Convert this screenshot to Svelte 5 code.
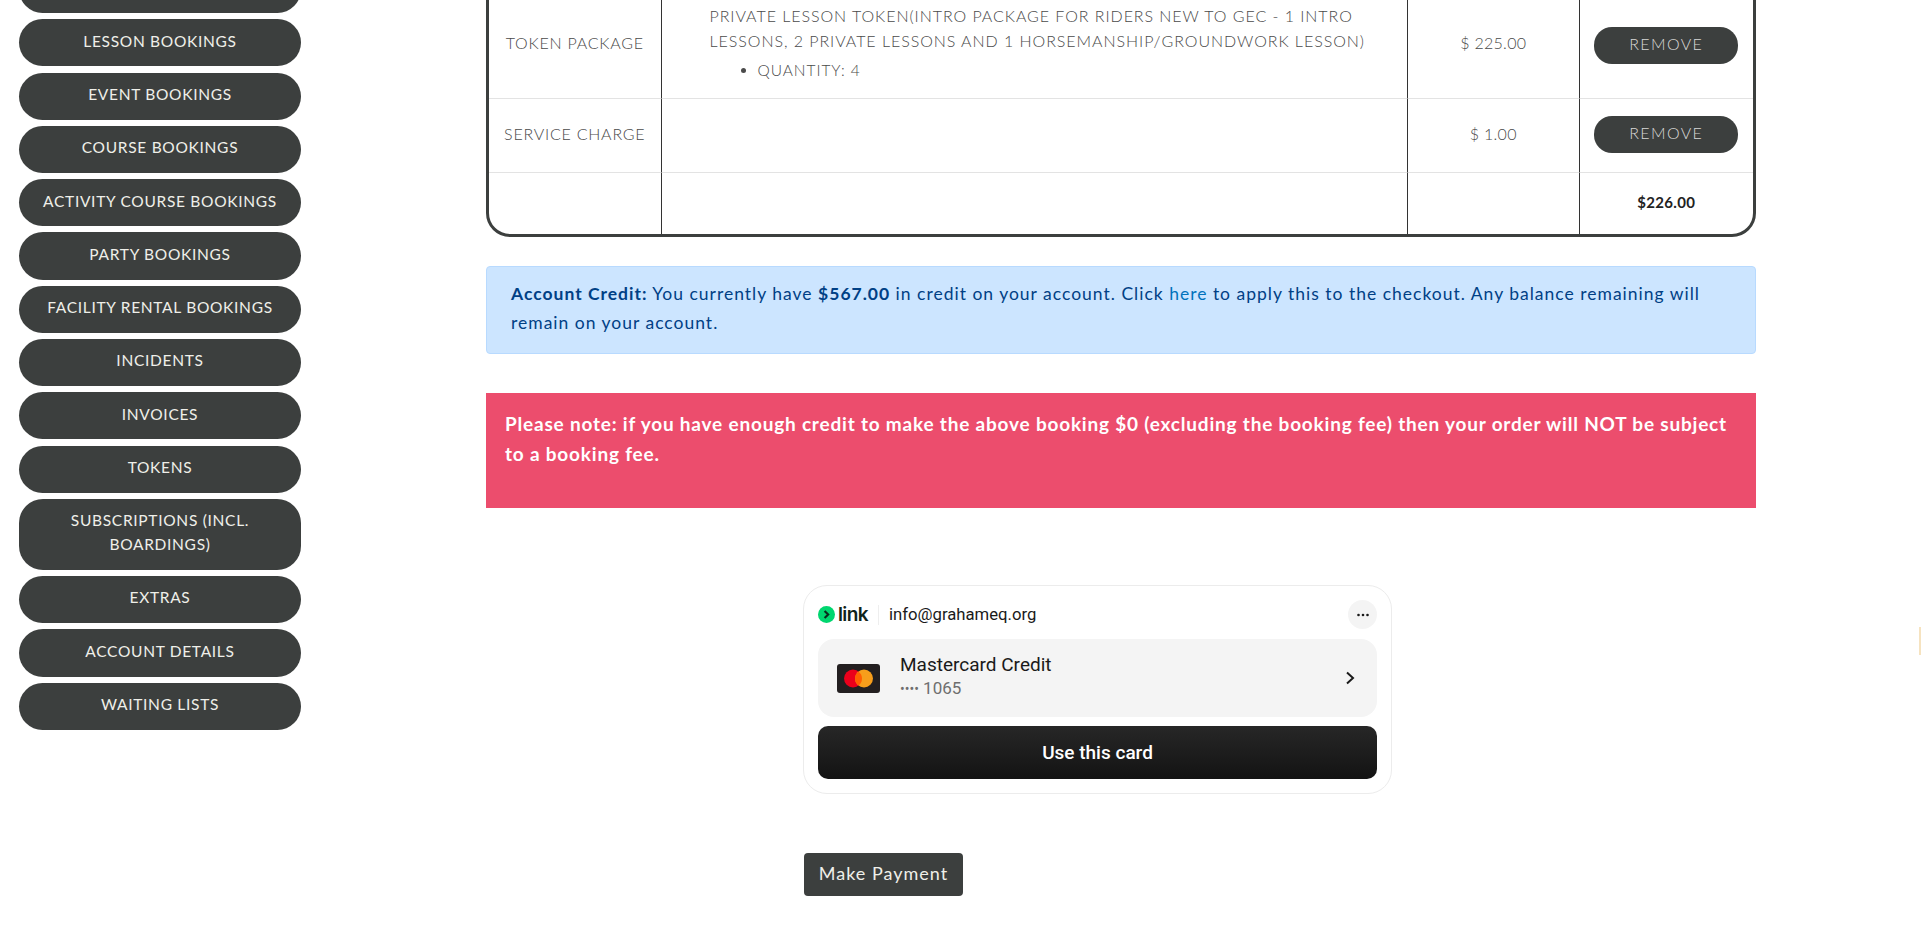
<script lang="ts">
	const navItems = [
		'Private Bookings',
		'Lesson Bookings',
		'Event Bookings',
		'Course Bookings',
		'Activity Course Bookings',
		'Party Bookings',
		'Facility Rental Bookings',
		'Incidents',
		'Invoices',
		'Tokens',
		'Subscriptions (incl. Boardings)',
		'Extras',
		'Account Details',
		'Waiting Lists',
	];
</script>

<div class="page">
	<nav class="sidebar">
		{#each navItems as item}
			<a class="pill" href="#nav">{item}</a>
		{/each}
	</nav>

	<main class="content">
		<table class="basket">
			<colgroup>
				<col class="col-type" />
				<col />
				<col class="col-price" />
				<col class="col-action" />
			</colgroup>
			<tbody>
				<tr class="row-head">
					<td></td>
					<td></td>
					<td></td>
					<td></td>
				</tr>
				<tr class="row-token">
					<td class="center label">Token Package</td>
					<td class="desc">
						Private Lesson Token(Intro package for riders new to GEC - 1 intro lessons, 2 private lessons and 1 horsemanship/groundwork lesson)
						<ul>
							<li>Quantity: 4</li>
						</ul>
					</td>
					<td class="center">$ 225.00</td>
					<td class="center"><button class="remove">Remove</button></td>
				</tr>
				<tr class="row-service">
					<td class="center label">Service Charge</td>
					<td></td>
					<td class="center">$ 1.00</td>
					<td class="center"><button class="remove">Remove</button></td>
				</tr>
				<tr class="row-total">
					<td></td>
					<td></td>
					<td></td>
					<td class="center total">$226.00</td>
				</tr>
			</tbody>
		</table>

		<div class="credit">
			<strong>Account Credit:</strong> You currently have <strong>$567.00</strong> in credit on your account. Click <a href="#here">here</a> to apply this to the checkout. Any balance remaining will remain on your account.
		</div>

		<div class="note">
			Please note: if you have enough credit to make the above booking $0 (excluding the booking fee) then your order will NOT be subject to a booking fee.
		</div>

		<section class="payment">
			<div class="link-card">
				<div class="link-head">
					<span class="link-logo">
						<svg width="17" height="17" viewBox="0 0 16 16" aria-hidden="true">
							<circle cx="8" cy="8" r="8" fill="#00d66f" />
							<path d="M6.2 4.6 9.6 8l-3.4 3.4" fill="none" stroke="#0a2a1c" stroke-width="2" />
						</svg>
						<span class="link-word">link</span>
					</span>
					<span class="link-email">info@grahameq.org</span>
					<span class="link-more" aria-hidden="true">
						<svg width="14" height="4" viewBox="0 0 14 4">
							<circle cx="2.5" cy="2" r="1.3" fill="#1a1a1a" />
							<circle cx="7" cy="2" r="1.3" fill="#1a1a1a" />
							<circle cx="11.5" cy="2" r="1.3" fill="#1a1a1a" />
						</svg>
					</span>
				</div>
				<div class="link-method">
					<svg class="mc" width="43" height="29" viewBox="0 0 43 29" aria-hidden="true">
						<rect width="43" height="29" rx="3" fill="#231f20" />
						<circle cx="16" cy="14.5" r="9" fill="#eb001b" />
						<circle cx="27" cy="14.5" r="9" fill="#f79e1b" />
						<path d="M21.5 7.38a9 9 0 0 1 0 14.24 9 9 0 0 1 0-14.24z" fill="#ff5f00" />
					</svg>
					<div class="method-text">
						<div class="method-name">Mastercard Credit</div>
						<div class="method-num"><span class="dots">••••</span> 1065</div>
					</div>
					<svg class="chev" width="10" height="16" viewBox="0 0 10 16" aria-hidden="true">
						<path d="M2 2.5 8 8l-6 5.5" fill="none" stroke="#1a1a1a" stroke-width="2" />
					</svg>
				</div>
				<button class="link-use">Use this card</button>
			</div>
			<button class="make-payment">Make Payment</button>
		</section>
	</main>

	<span class="edge-tab" aria-hidden="true"></span>
</div>

<style>
	:global(body) {
		margin: 0;
		background: #fff;
		overflow: hidden;
	}

	.page {
		display: flex;
		margin-top: -34px;
		font-family: Lato, 'Liberation Sans', sans-serif;
		color: #4a4a4a;
	}

	.sidebar {
		display: flex;
		flex: none;
		flex-direction: column;
		gap: 6.1px;
		box-sizing: border-box;
		width: 486px;
		padding: 0 0 0 19px;
	}

	.pill {
		box-sizing: border-box;
		width: 282px;
		padding: 9.4px 16px 13.8px;
		border-radius: 24px;
		background: #3c3f3e;
		color: #efefe9;
		font-size: 15.5px;
		line-height: 24px;
		letter-spacing: 0.7px;
		text-align: center;
		text-decoration: none;
		text-transform: uppercase;
	}

	.content {
		display: flex;
		flex: none;
		flex-direction: column;
		width: 1269.5px;
	}

	.basket {
		box-sizing: border-box;
		width: 100%;
		height: 269px;
		border: 3px solid #3c3f3e;
		border-spacing: 0;
		border-collapse: separate;
		border-radius: 24px;
		table-layout: fixed;
		font-size: 16px;
		font-weight: 300;
		text-transform: uppercase;
		letter-spacing: 0.3px;
	}

	.col-type {
		width: 171.5px;
	}

	.col-price {
		width: 172.5px;
	}

	.col-action {
		width: 173.5px;
	}

	.basket td {
		padding: 0 8px;
		border-top: 1px solid #e3e3e3;
		border-left: 1px solid #333;
		vertical-align: middle;
	}

	.basket td:first-child {
		border-left: 0;
	}

	.basket tr:first-child td {
		border-top: 0;
	}

	.row-head {
		height: 19px;
	}

	.row-token {
		height: 110px;
	}

	.row-service {
		height: 74px;
	}

	.row-total {
		height: 62px;
	}

	.row-token td {
		padding-bottom: 2px;
	}

	.row-service td {
		padding-bottom: 5px;
	}

	.center {
		text-align: center;
	}

	.label {
		letter-spacing: 0.77px;
	}

	.basket td.desc {
		padding: 0 30px 2px 48px;
		line-height: 25px;
		letter-spacing: 0.95px;
	}

	.desc ul {
		margin: 5px 0 0;
		padding: 0 0 0 48px;
		font-size: 15.5px;
	}

	.remove {
		display: block;
		box-sizing: border-box;
		width: 144px;
		height: 37px;
		margin: 5px auto 0;
		padding: 0 0 4px;
		border: 0;
		border-radius: 18px;
		background: #3c3f3e;
		color: #d8d8d6;
		font: inherit;
		letter-spacing: 1.4px;
		text-transform: uppercase;
	}

	.row-service .remove {
		margin-top: 2px;
	}

	.basket td.total {
		padding-bottom: 4px;
		color: #222;
		font-size: 15px;
		font-weight: 700;
	}

	.credit {
		box-sizing: border-box;
		height: 88px;
		margin-top: 29px;
		padding: 12px 24px;
		border: 1px solid #b8daff;
		border-radius: 4px;
		background: #cce5ff;
		color: #004085;
		font-size: 17.5px;
		line-height: 29px;
		letter-spacing: 1px;
	}

	.credit a {
		color: #0072bc;
		text-decoration: none;
	}

	.note {
		box-sizing: border-box;
		height: 115px;
		margin-top: 39px;
		padding: 16px 19px;
		background: #ec4d6d;
		color: #fff;
		font-size: 19px;
		font-weight: 700;
		line-height: 29.5px;
		letter-spacing: 0.8px;
	}

	.payment {
		display: flex;
		flex-direction: column;
		align-items: flex-start;
		padding: 77px 0 0 317px;
	}

	.link-card {
		display: flex;
		flex-direction: column;
		box-sizing: border-box;
		width: 589px;
		height: 209px;
		padding: 14px;
		border: 1px solid #ececec;
		border-radius: 24px;
		font-family: Roboto, 'Liberation Sans', sans-serif;
	}

	.link-head {
		display: flex;
		align-items: center;
		height: 29px;
		color: #1a1a1a;
	}

	.link-logo {
		display: flex;
		align-items: center;
		gap: 3px;
		height: 20px;
		padding-right: 10px;
		border-right: 1px solid #eee;
	}

	.link-word {
		color: #10231a;
		font-family: Inter, Roboto, sans-serif;
		font-size: 19px;
		font-weight: 600;
		letter-spacing: -0.6px;
		line-height: 20px;
	}

	.link-email {
		margin-left: 10px;
		font-size: 16.7px;
	}

	.link-more {
		display: flex;
		align-items: center;
		justify-content: center;
		width: 29px;
		height: 29px;
		margin-left: auto;
		border-radius: 50%;
		background: #f4f4f4;
	}

	.link-method {
		display: flex;
		align-items: center;
		height: 78px;
		margin-top: 10px;
		padding: 0 19px;
		border-radius: 16px;
		background: #f4f4f4;
	}

	.method-text {
		margin-top: -3px;
		margin-left: 20px;
	}

	.method-name {
		color: #1a1a1a;
		font-size: 19px;
		line-height: 24px;
	}

	.method-num {
		color: #6e6e6e;
		font-size: 17px;
		line-height: 22px;
	}

	.dots {
		font-size: 14px;
	}

	.chev {
		margin-left: auto;
		margin-right: 3px;
	}

	.link-use {
		height: 53px;
		margin-top: 9px;
		border: 0;
		border-radius: 10px;
		background: linear-gradient(#272727, #131313);
		color: #fff;
		font-family: inherit;
		font-size: 19px;
		font-weight: 500;
	}

	.make-payment {
		width: 159px;
		height: 43px;
		margin-top: 59px;
		margin-left: 1px;
		padding: 0 0 4px;
		border: 0;
		border-radius: 4px;
		background: #3c3f3e;
		color: #efefe9;
		font-family: inherit;
		font-size: 18px;
		letter-spacing: 1px;
	}

	.edge-tab {
		position: fixed;
		top: 627px;
		right: 0;
		width: 2px;
		height: 28px;
		background: #f6e3c0;
	}
</style>
